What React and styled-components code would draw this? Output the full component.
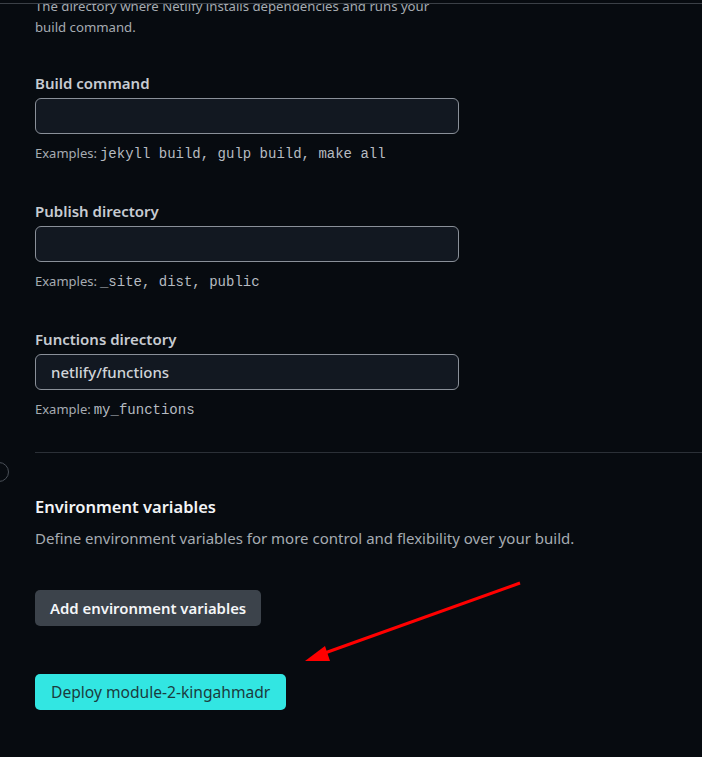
import React from "react";
import styled, { createGlobalStyle } from "styled-components";

const Global = createGlobalStyle`
  html, body { margin: 0; padding: 0; background: #070b10; }
  body { font-family: "Noto Sans", "Open Sans", sans-serif; }
`;

const Viewport = styled.div`
  position: relative;
  width: 702px;
  height: 757px;
  overflow: hidden;
  background: #070b10;
`;

const TopBar = styled.div`
  position: absolute;
  top: 0;
  left: 0;
  right: 0;
  height: 3px;
  background: #070b10;
  border-bottom: 1px solid #3b4047;
  z-index: 2;
`;

const Scroller = styled.div`
  margin-top: -4px;
  padding-left: 35px;
  display: flex;
  flex-direction: column;
`;

const Intro = styled.p`
  margin: 0;
  width: 420px;
  font-size: 13.2px;
  line-height: 21px;
  color: #a6abb2;
`;

const Field = styled.div`
  display: flex;
  flex-direction: column;
  width: 424px;
  margin-top: ${(p) => p.$top}px;
`;

const Label = styled.label`
  font-size: 15px;
  font-weight: 600;
  color: #c7ccd2;
  line-height: 20px;
  margin-bottom: 5px;
`;

const Input = styled.div`
  box-sizing: border-box;
  height: 36px;
  border: 1px solid #8a9099;
  border-radius: 6px;
  background: #121821;
  padding: 0 15px;
  display: flex;
  align-items: center;
  font-size: 15px;
  font-weight: 500;
  color: #d0d4d9;
`;

const Help = styled.div`
  margin-top: 9px;
  font-size: 13px;
  line-height: 20px;
  color: #a6abb2;
  white-space: nowrap;
`;

const Code = styled.code`
  font-family: "Liberation Mono", "Courier New", monospace;
  font-size: 14px;
  color: #b6bbc1;
  margin-left: 3px;
`;

const Divider = styled.hr`
  margin: 32px 0 0 0;
  border: none;
  border-top: 1px solid #2b3037;
`;

const Toggle = styled.div`
  position: absolute;
  left: -11px;
  top: 462px;
  width: 20px;
  height: 20px;
  border: 1px solid #4a5058;
  border-radius: 50%;
  box-sizing: border-box;
`;

const Heading = styled.h2`
  margin: 42px 0 0 0;
  font-size: 16.5px;
  font-weight: 600;
  line-height: 24px;
  color: #f2f4f6;
`;

const Desc = styled.p`
  margin: 8px 0 0 0;
  font-size: 15px;
  line-height: 22px;
  color: #a6abb2;
`;

const Button = styled.button`
  align-self: flex-start;
  height: 36px;
  padding: 0 ${(p) => (p.$primary ? 16 : 15)}px;
  border: none;
  border-radius: 5px;
  font-family: inherit;
  font-size: ${(p) => (p.$primary ? 15.6 : 14.9)}px;
  margin-top: ${(p) => p.$top}px;
  background: ${(p) => (p.$primary ? "#32e6e2" : "#3c434b")};
  color: ${(p) => (p.$primary ? "#1b3b3e" : "#f4f6f8")};
  font-weight: ${(p) => (p.$primary ? 400 : 600)};
`;

const Arrow = styled.svg`
  position: absolute;
  left: 0;
  top: 0;
  pointer-events: none;
`;

export default function App() {
  return (
    <>
      <Global />
      <Viewport>
        <TopBar />
        <Scroller>
          <Intro>
            The directory where Netlify installs dependencies and runs your build command.
          </Intro>
          <Field $top={35}>
            <Label>Build command</Label>
            <Input />
            <Help>
              Examples:<Code>jekyll build, gulp build, make all</Code>
            </Help>
          </Field>
          <Field $top={37}>
            <Label>Publish directory</Label>
            <Input />
            <Help>
              Examples:<Code>_site, dist, public</Code>
            </Help>
          </Field>
          <Field $top={37}>
            <Label>Functions directory</Label>
            <Input>netlify/functions</Input>
            <Help>
              Example:<Code>my_functions</Code>
            </Help>
          </Field>
          <Divider />
          <Heading>Environment variables</Heading>
          <Desc>Define environment variables for more control and flexibility over your build.</Desc>
          <Button $top={41}>Add environment variables</Button>
          <Button $primary $top={48}>Deploy module-2-kingahmadr</Button>
        </Scroller>
        <Toggle />
        <Arrow width="702" height="757" viewBox="0 0 702 757">
          <line x1="520" y1="583" x2="322" y2="654" stroke="#ff0000" strokeWidth="3" />
          <polygon points="305,661 325,646 330,661" fill="#ff0000" />
        </Arrow>
      </Viewport>
    </>
  );
}
